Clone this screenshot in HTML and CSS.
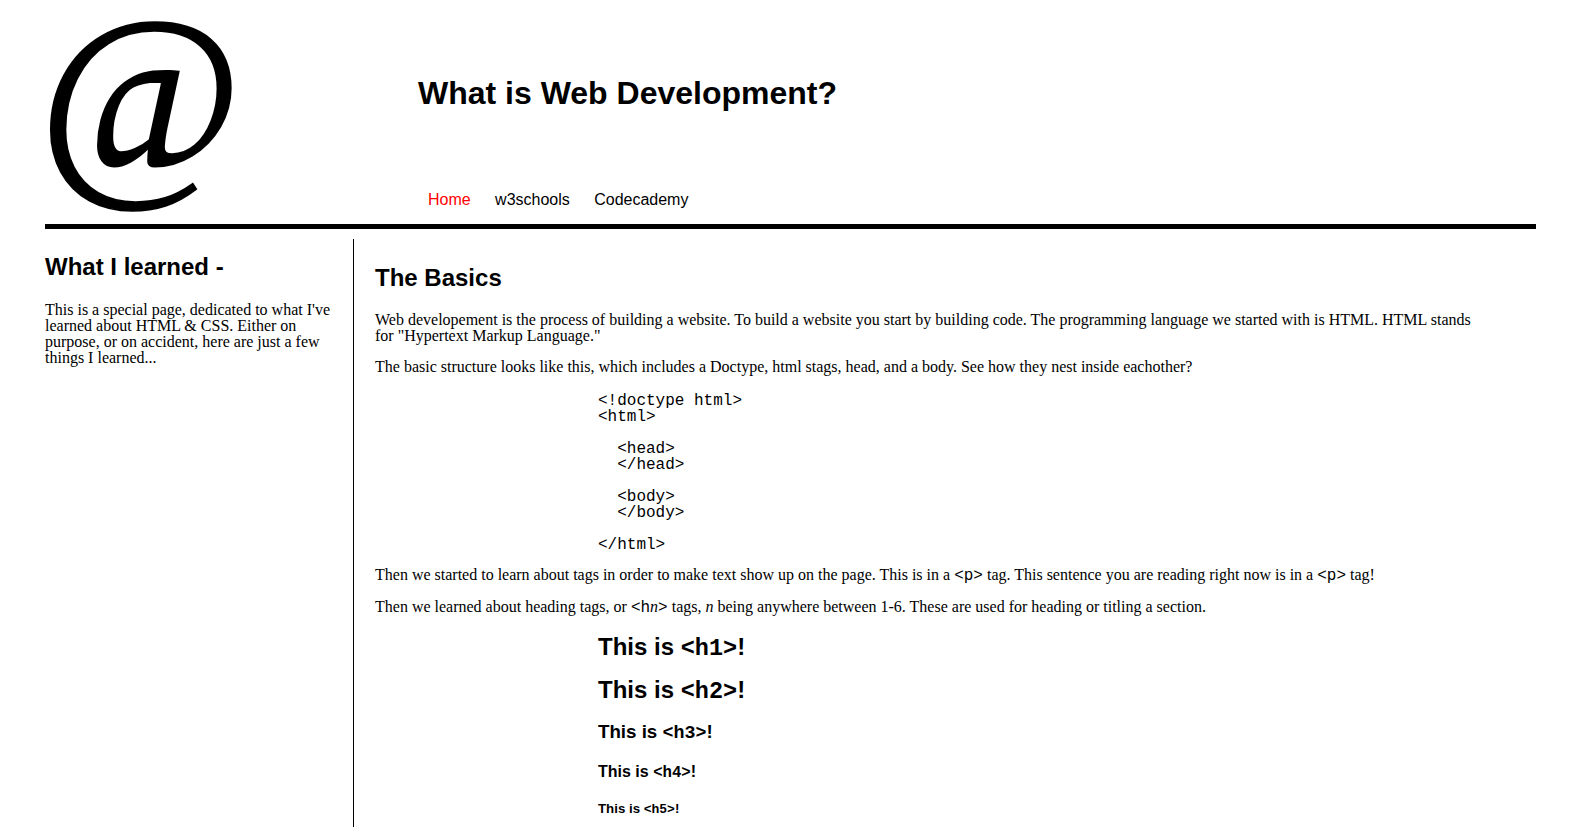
FILE: index.html
```html
<!DOCTYPE html>
<html lang="en">
<head>
<meta charset="utf-8">
<title>What is Web Development?</title>
<link rel="stylesheet" href="styles.css">
</head>
<body>
<div class="page">
  <header class="masthead">
    <div class="logo"><span class="logo-glyph">@</span></div>
    <div class="titles">
      <h1 class="site-title">What is Web Development?</h1>
      <nav class="nav">
        <a class="nav-link current" href="#">Home</a>
        <a class="nav-link" href="#">w3schools</a>
        <a class="nav-link" href="#">Codecademy</a>
      </nav>
    </div>
  </header>
  <div class="rule"></div>
  <div class="columns">
    <aside class="sidebar">
      <h2 class="side-title">What I learned -</h2>
      <p class="side-text">This is a special page, dedicated to what I've learned about HTML &amp; CSS. Either on purpose, or on accident, here are just a few things I learned...</p>
    </aside>
    <main class="content">
      <h2 class="section-title">The Basics</h2>
      <p class="p1">Web developement is the process of building a website. To build a website you start by building code. The programming language we started with is HTML. HTML stands for "Hypertext Markup Language."</p>
      <p class="p2">The basic structure looks like this, which includes a Doctype, html stags, head, and a body. See how they nest inside eachother?</p>
<pre class="code-sample">&lt;!doctype html&gt;
&lt;html&gt;

  &lt;head&gt;
  &lt;/head&gt;

  &lt;body&gt;
  &lt;/body&gt;

&lt;/html&gt;</pre>
      <p class="p3">Then we started to learn about tags in order to make text show up on the page. This is in a <code class="tag">&lt;p&gt;</code> tag. This sentence you are reading right now is in a <code class="tag">&lt;p&gt;</code> tag!</p>
      <p class="p4">Then we learned about heading tags, or <code class="tag">&lt;h<em class="var">n</em>&gt;</code> tags, <em>n</em> being anywhere between 1-6. These are used for heading or titling a section.</p>
      <div class="demo">
        <div class="demo-h demo-h1">This is <code class="htag">&lt;h1&gt;</code>!</div>
        <div class="demo-h demo-h2">This is <code class="htag">&lt;h2&gt;</code>!</div>
        <div class="demo-h demo-h3">This is <code class="htag">&lt;h3&gt;</code>!</div>
        <div class="demo-h demo-h4">This is <code class="htag">&lt;h4&gt;</code>!</div>
        <div class="demo-h demo-h5">This is <code class="htag">&lt;h5&gt;</code>!</div>
      </div>
    </main>
  </div>
</div>
</body>
</html>
```

FILE: styles.css
```css
html, body {
  margin: 0;
  padding: 0;
  background: #fff;
  color: #000;
}

body {
  font-family: "Liberation Serif", "Times New Roman", serif;
  font-size: 16px;
  line-height: 16px;
}

.page {
  width: 1491px;
  margin: 0 0 0 45px;
}

/* ---------- header ---------- */
.masthead {
  display: flex;
  height: 224px;
}

.logo {
  width: 373px;
  flex: none;
  height: 224px;
  overflow: visible;
}

.logo-glyph {
  display: block;
  margin-left: -6px;
  font-family: "Liberation Serif", "Times New Roman", serif;
  font-size: 221px;
  line-height: 190px;
  color: #000;
  -webkit-text-stroke: 1.6px #000;
}

.titles {
  flex: 1;
}

.site-title {
  margin: 77px 0 0;
  font-family: "Liberation Sans", Arial, sans-serif;
  font-weight: bold;
  font-size: 32px;
  line-height: 1;
}

.nav {
  display: flex;
  gap: 4.4px;
  margin-top: 83px;
  font-family: "Liberation Sans", Arial, sans-serif;
  font-size: 16px;
  line-height: 1;
}

.nav-link {
  padding: 0 10px;
  color: #000;
  text-decoration: none;
}

.nav-link.current {
  color: #ff0000;
}

.rule {
  height: 5px;
  background: #000;
}

/* ---------- columns ---------- */
.columns {
  display: flex;
  align-items: flex-start;
}

.sidebar {
  width: 300px;
  padding-right: 8px;
  flex: none;
}

.side-title,
.section-title {
  font-family: "Liberation Sans", Arial, sans-serif;
  font-weight: bold;
  font-size: 24px;
  line-height: 1;
  margin: 0;
}

.side-title {
  margin-top: 26px;
}

.side-text {
  margin: 23px 0 0;
  line-height: 16px;
}

.content {
  flex: 1;
  margin-top: 10px;
  border-left: 1px solid #000;
  padding: 0 50px 40px 21px;
  min-height: 640px;
}

.content p {
  margin: 0;
}

.section-title {
  margin-top: 27px;
}

.content .p1 { margin-top: 22px; }
.content .p2 { margin-top: 15px; }
.content .p3 { margin-top: 14px; }
.content .p4 { margin-top: 16px; }

.code-sample {
  margin: 18px 0 0 223px;
  font-family: "Liberation Mono", "Courier New", monospace;
  font-size: 16px;
  line-height: 16px;
}

.tag {
  font-family: "Liberation Mono", "Courier New", monospace;
  font-size: 16px;
  line-height: 0;
}

.tag .var,
.p4 em {
  font-family: "Liberation Serif", "Times New Roman", serif;
  font-style: italic;
}

/* ---------- heading samples ---------- */
.demo {
  margin-left: 223px;
  font-family: "Liberation Sans", Arial, sans-serif;
  font-weight: bold;
  line-height: 1;
}

.demo-h {
  height: 1em;
}

.htag {
  font-family: "Liberation Mono", "Courier New", monospace;
  font-weight: bold;
  font-size: 0.98em;
  line-height: 0;
}

.demo-h1 { font-size: 24px; margin-top: 20px; }
.demo-h2 { font-size: 24px; margin-top: 19px; }
.demo-h3 { font-size: 18.72px; margin-top: 21px; }
.demo-h4 { font-size: 16px; margin-top: 22px; }
.demo-h5 { font-size: 13.28px; margin-top: 22px; }
```
